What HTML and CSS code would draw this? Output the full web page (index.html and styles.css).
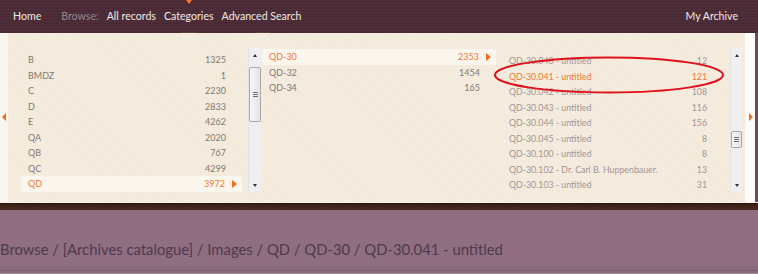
FILE: index.html
```html
<!DOCTYPE html>
<html lang="en">
<head>
<meta charset="utf-8">
<title>Browse - Categories</title>
<link rel="stylesheet" href="styles.css">
</head>
<body>
<header class="topnav">
  <span class="nav-marker"></span>
  <nav class="nav-main">
    <a class="nav-link nav-home" href="#">Home</a>
    <span class="nav-label">Browse:</span>
    <a class="nav-link" href="#">All records</a>
    <a class="nav-link" href="#">Categories</a>
    <a class="nav-link" href="#">Advanced Search</a>
  </nav>
  <a class="nav-link nav-right" href="#">My Archive</a>
  <span class="nav-tab tab-a"></span>
  <span class="nav-tab tab-b"></span>
</header>

<main class="browser">
  <div class="edge edge-left"><span class="side-arrow left"></span></div>
  <div class="columns">
    <section class="col">
      <ul class="list list-1">
        <li class="row"><span class="name">B</span><span class="count">1325</span><span class="arr"></span></li>
        <li class="row"><span class="name">BMDZ</span><span class="count">1</span><span class="arr"></span></li>
        <li class="row"><span class="name">C</span><span class="count">2230</span><span class="arr"></span></li>
        <li class="row"><span class="name">D</span><span class="count">2833</span><span class="arr"></span></li>
        <li class="row"><span class="name">E</span><span class="count">4262</span><span class="arr"></span></li>
        <li class="row"><span class="name">QA</span><span class="count">2020</span><span class="arr"></span></li>
        <li class="row"><span class="name">QB</span><span class="count">767</span><span class="arr"></span></li>
        <li class="row"><span class="name">QC</span><span class="count">4299</span><span class="arr"></span></li>
        <li class="row selected"><span class="name">QD</span><span class="count">3972</span><span class="arr"></span></li>
      </ul>
      <div class="scrollbar">
        <span class="sb-up"></span>
        <span class="sb-thumb thumb-1"><span class="grip"></span></span>
        <span class="sb-down"></span>
      </div>
    </section>
    <section class="col col-wide">
      <ul class="list list-2">
        <li class="row selected"><span class="name">QD-30</span><span class="count">2353</span><span class="arr"></span></li>
        <li class="row"><span class="name">QD-32</span><span class="count">1454</span><span class="arr"></span></li>
        <li class="row"><span class="name">QD-34</span><span class="count">165</span><span class="arr"></span></li>
      </ul>
    </section>
    <section class="col col-last">
      <ul class="list list-3">
        <li class="row"><span class="name">QD-30.040 - untitled</span><span class="count">12</span><span class="arr"></span></li>
        <li class="row current"><span class="name">QD-30.041 - untitled</span><span class="count">121</span><span class="arr"></span></li>
        <li class="row"><span class="name">QD-30.042 - untitled</span><span class="count">108</span><span class="arr"></span></li>
        <li class="row"><span class="name">QD-30.043 - untitled</span><span class="count">116</span><span class="arr"></span></li>
        <li class="row"><span class="name">QD-30.044 - untitled</span><span class="count">156</span><span class="arr"></span></li>
        <li class="row"><span class="name">QD-30.045 - untitled</span><span class="count">8</span><span class="arr"></span></li>
        <li class="row"><span class="name">QD-30.100 - untitled</span><span class="count">8</span><span class="arr"></span></li>
        <li class="row"><span class="name">QD-30.102 - Dr. Carl B. Huppenbauer.</span><span class="count">13</span><span class="arr"></span></li>
        <li class="row"><span class="name">QD-30.103 - untitled</span><span class="count">31</span><span class="arr"></span></li>
      </ul>
      <div class="scrollbar">
        <span class="sb-up"></span>
        <span class="sb-thumb thumb-3"><span class="grip"></span></span>
        <span class="sb-down"></span>
      </div>
    </section>
  </div>
  <div class="edge edge-right"><span class="side-arrow right"></span></div>
  <svg class="annotation" width="234" height="40" viewBox="0 0 234 40" aria-hidden="true">
    <ellipse cx="117" cy="19" rx="114" ry="17.5" fill="none" stroke="#e0101c" stroke-width="2"/>
  </svg>
</main>

<div class="band"></div>
<footer class="crumbs">
  <p class="crumb-text">Browse / [Archives catalogue] / Images / QD / QD-30 / QD-30.041 - untitled</p>
</footer>
</body>
</html>
```

FILE: styles.css
```css
* { box-sizing: border-box; }

html, body {
  margin: 0;
  padding: 0;
}

body {
  width: 758px;
  height: 274px;
  overflow: hidden;
  font-family: Lato, "Open Sans", "Liberation Sans", sans-serif;
  background: #8e6e80;
}

/* ---------- top navigation ---------- */
.topnav {
  position: relative;
  height: 33px;
  display: flex;
  align-items: center;
  justify-content: space-between;
  padding: 0 20px 1px 13px;
  background-color: #4b2b37;
  background-image: repeating-linear-gradient(180deg,
      rgba(255,255,255,0.025) 0px, rgba(255,255,255,0.025) 1px,
      rgba(0,0,0,0.03) 1px, rgba(0,0,0,0.03) 3px);
}

.nav-main {
  display: flex;
  align-items: center;
}

.nav-link,
.nav-label {
  font-size: 10.6px;
  text-decoration: none;
  color: #f1e9e3;
  margin-right: 8px;
  white-space: nowrap;
}

.nav-home { margin-right: 20px; }
.nav-label { color: #9b8490; }
.nav-right { margin-right: 0; }

.nav-marker {
  position: absolute;
  left: 186px;
  top: 0;
  width: 0;
  height: 0;
  border-left: 3px solid transparent;
  border-right: 3px solid transparent;
  border-top: 4px solid #f07a2c;
}

.nav-tab {
  position: absolute;
  top: 32px;
  height: 2px;
  background: #5a4034;
}
.tab-a { left: 181px; width: 16px; }
.tab-b { left: 255px; width: 15px; }

/* ---------- browser panel ---------- */
.browser {
  position: relative;
  height: 169px;
  display: flex;
  background-color: #f3eadb;
  background-image: repeating-linear-gradient(45deg,
      rgba(255,255,255,0.18) 0px, rgba(255,255,255,0.18) 1px,
      rgba(0,0,0,0) 1px, rgba(0,0,0,0) 4px);
}

.edge {
  display: flex;
  align-items: center;
}

.edge-left {
  width: 8px;
  background: #faf6ef;
  padding-left: 2px;
  padding-bottom: 2px;
}

.edge-right {
  width: 13px;
  margin-left: auto;
  background: #fdfbf8;
  border-right: 3px solid #6b4c5c;
  padding-left: 4px;
  padding-bottom: 2px;
}

.side-arrow {
  width: 0;
  height: 0;
  border-top: 4px solid transparent;
  border-bottom: 4px solid transparent;
}
.side-arrow.left { border-right: 4px solid #f06a20; }
.side-arrow.right { border-left: 4px solid #f06a20; }

.columns {
  display: flex;
  padding: 15px 0 0 13px;
}

.col {
  display: flex;
  width: 241px;
  height: 143.5px;
}
.col-wide { width: 240px; }
.col-last { width: 240px; }

.list {
  list-style: none;
  margin: 0;
  width: 221px;
  height: 143.5px;
  overflow: hidden;
  color: #837870;
  font-size: 9px;
}
.list-1 { padding: 4px 0 0 0; }
.list-2 { padding: 1px 0 0 0; width: 234px; }
.list-3 { padding: 5px 0 0 0; color: #a39497; font-size: 8.8px; }

.row {
  height: 15.5px;
  display: flex;
  align-items: center;
  padding: 0 4px 0 7px;
  white-space: nowrap;
}

.row .name { flex: 1; }
.row .arr {
  width: 5px;
  margin-left: 7px;
  height: 9px;
}

.row.selected {
  background: #faf5ed;
  color: #f07a30;
}
.row.selected .arr {
  width: 0;
  height: 0;
  margin-right: 1px;
  border-top: 4.5px solid transparent;
  border-bottom: 4.5px solid transparent;
  border-left: 5px solid #f06a20;
}

.row.current { color: #f07a30; }

/* ---------- fake scrollbars ---------- */
.scrollbar {
  margin-left: 6px;
  width: 13px;
  height: 143.5px;
  background: #efefef;
  border-left: 1px solid #e4e4e4;
  position: relative;
  display: flex;
  flex-direction: column;
  align-items: center;
}
.col-last .scrollbar { margin-left: 7px; width: 12px; }

.sb-up,
.sb-down {
  width: 0;
  height: 0;
  border-left: 2.5px solid transparent;
  border-right: 2.5px solid transparent;
}
.sb-up {
  margin-top: 6px;
  border-bottom: 3px solid #333;
}
.sb-down {
  margin-top: auto;
  margin-bottom: 5px;
  border-top: 3px solid #333;
}

.sb-thumb {
  position: absolute;
  left: 0;
  right: 0;
  border: 1px solid #a9a9a9;
  border-radius: 2px;
  background: linear-gradient(90deg, #f7f7f7, #e3e3e3);
  display: flex;
  align-items: center;
  justify-content: center;
}
.thumb-1 { top: 19px; height: 55px; }
.thumb-3 { top: 83px; height: 17px; }

.grip {
  width: 5px;
  height: 5px;
  background: repeating-linear-gradient(180deg, #6f6f6f 0px, #6f6f6f 1px, transparent 1px, transparent 2px);
}

.annotation {
  position: absolute;
  left: 492px;
  top: 23px;
}

/* ---------- bottom ---------- */
.band {
  height: 8px;
  background: linear-gradient(180deg, #f8f2e6 0px, #f8f2e6 1px, #2a1711 1px, #3b2119 3px, #4c2d24 8px);
}

.crumbs {
  height: 64px;
  padding-top: 29px;
  background-color: #8e6e80;
  border-bottom: 1px solid #a38b98;
  box-shadow: inset 0 -8px 0 #8a6a7c;
}

.crumb-text {
  margin: 0;
  font-size: 14.8px;
  line-height: 20px;
  color: #4e3a4c;
  white-space: nowrap;
  border-bottom: 1px solid #7d5e70;
  padding-bottom: 11px;
}
```
